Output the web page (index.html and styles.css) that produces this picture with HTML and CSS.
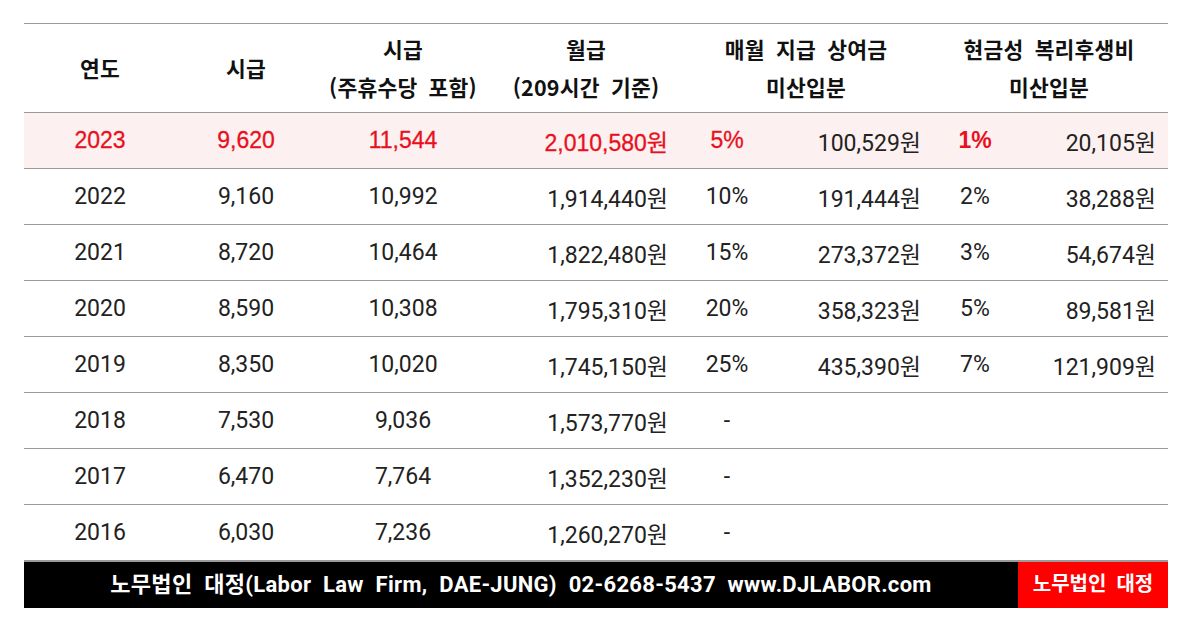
FILE: index.html
```html
<!DOCTYPE html>
<html lang="ko">
<head>
<meta charset="utf-8">
<link rel="stylesheet" href="styles.css">
</head>
<body>
<div class="wrap">
  <table class="wage">
    <colgroup>
      <col class="c1"><col class="c2"><col class="c3"><col class="c4"><col class="c5"><col class="c6"><col class="c7"><col class="c8">
    </colgroup>
    <thead>
      <tr>
        <th>연도</th>
        <th>시급</th>
        <th>시급<br>(주휴수당 포함)</th>
        <th>월급<br>(209시간 기준)</th>
        <th colspan="2">매월 지급 상여금<br>미산입분</th>
        <th colspan="2">현금성 복리후생비<br>미산입분</th>
      </tr>
    </thead>
    <tbody>
      <tr class="hl">
        <td>2023</td><td>9,620</td><td>11,544</td><td class="r">2,010,580원</td><td class="p">5%</td><td class="r dark">100,529원</td><td class="p strong">1%</td><td class="r dark">20,105원</td>
      </tr>
      <tr>
        <td>2022</td><td>9,160</td><td>10,992</td><td class="r">1,914,440원</td><td class="p">10%</td><td class="r">191,444원</td><td class="p">2%</td><td class="r">38,288원</td>
      </tr>
      <tr>
        <td>2021</td><td>8,720</td><td>10,464</td><td class="r">1,822,480원</td><td class="p">15%</td><td class="r">273,372원</td><td class="p">3%</td><td class="r">54,674원</td>
      </tr>
      <tr>
        <td>2020</td><td>8,590</td><td>10,308</td><td class="r">1,795,310원</td><td class="p">20%</td><td class="r">358,323원</td><td class="p">5%</td><td class="r">89,581원</td>
      </tr>
      <tr>
        <td>2019</td><td>8,350</td><td>10,020</td><td class="r">1,745,150원</td><td class="p">25%</td><td class="r">435,390원</td><td class="p">7%</td><td class="r">121,909원</td>
      </tr>
      <tr>
        <td>2018</td><td>7,530</td><td>9,036</td><td class="r">1,573,770원</td><td class="p">-</td><td></td><td></td><td></td>
      </tr>
      <tr>
        <td>2017</td><td>6,470</td><td>7,764</td><td class="r">1,352,230원</td><td class="p">-</td><td></td><td></td><td></td>
      </tr>
      <tr>
        <td>2016</td><td>6,030</td><td>7,236</td><td class="r">1,260,270원</td><td class="p">-</td><td></td><td></td><td></td>
      </tr>
    </tbody>
  </table>
  <div class="footer">
    <div class="info">노무법인 대정(Labor Law Firm, DAE-JUNG) 02-6268-5437 www.DJLABOR.com</div>
    <div class="brand">노무법인 대정</div>
  </div>
</div>
</body>
</html>
```

FILE: styles.css
```css
html, body {
  margin: 0;
  padding: 0;
  background: #ffffff;
}
body {
  font-family: "Roboto", "Noto Sans CJK KR", sans-serif;
  color: #222222;
}
.wrap {
  width: 1144px;
  padding: 23px 0 0 24px;
}
.wage {
  width: 1144px;
  border-collapse: collapse;
  table-layout: fixed;
}
.c1 { width: 152px; }
.c2 { width: 140px; }
.c3 { width: 174px; }
.c4 { width: 192px; }
.c5 { width: 90px; }
.c6 { width: 158px; }
.c7 { width: 90px; }
.c8 { width: 148px; }
.wage thead tr {
  height: 89px;
  border-top: 1px solid #9a9a9a;
  border-bottom: 1px solid #9a9a9a;
}
.wage th {
  font-family: "Noto Sans CJK KR", sans-serif;
  font-weight: 700;
  font-size: 21.5px;
  line-height: 38px;
  color: #111111;
  text-align: center;
  padding: 0;
  word-spacing: 5px;
  letter-spacing: 0.2px;
}
.wage tbody tr {
  height: 56px;
  border-bottom: 1px solid #9a9a9a;
}
.wage td {
  font-size: 23px;
  text-align: center;
  padding: 0;
  color: #222222;
}
.wage td.r {
  text-align: right;
  padding-right: 14px;
}
.wage tr td:last-child.r { padding-right: 12px; }
.wage tr td:nth-child(6).r { padding-right: 9px; }
.wage tr.hl {
  background: #fdf0f0;
}
.wage tr.hl td {
  color: #e8101e;
  font-family: "Liberation Sans", "Noto Sans CJK KR", sans-serif;
  font-size: 23px;
  font-weight: 400;
  -webkit-text-stroke: 0.3px #e8101e;
}
.wage tr.hl td.strong {
  font-weight: 700;
  -webkit-text-stroke: 0;
}
.wage tr.hl td.dark {
  color: #222222;
  font-family: "Roboto", "Noto Sans CJK KR", sans-serif;
  -webkit-text-stroke: 0;
}
.footer {
  display: flex;
  height: 47px;
  border-top: 1px solid #9a9a9a;
  box-sizing: border-box;
  font-family: "Roboto", "Noto Sans CJK KR", sans-serif;
  font-weight: 700;
  color: #ffffff;
}
.info {
  width: 994px;
  background: #000000;
  display: flex;
  align-items: center;
  justify-content: center;
  padding-bottom: 6px;
  font-size: 22px;
  word-spacing: 6px;
  letter-spacing: 0.3px;
}
.brand {
  width: 150px;
  background: #ff0000;
  display: flex;
  align-items: center;
  justify-content: center;
  padding-bottom: 6px;
  font-size: 20px;
  word-spacing: 5px;
}
```
